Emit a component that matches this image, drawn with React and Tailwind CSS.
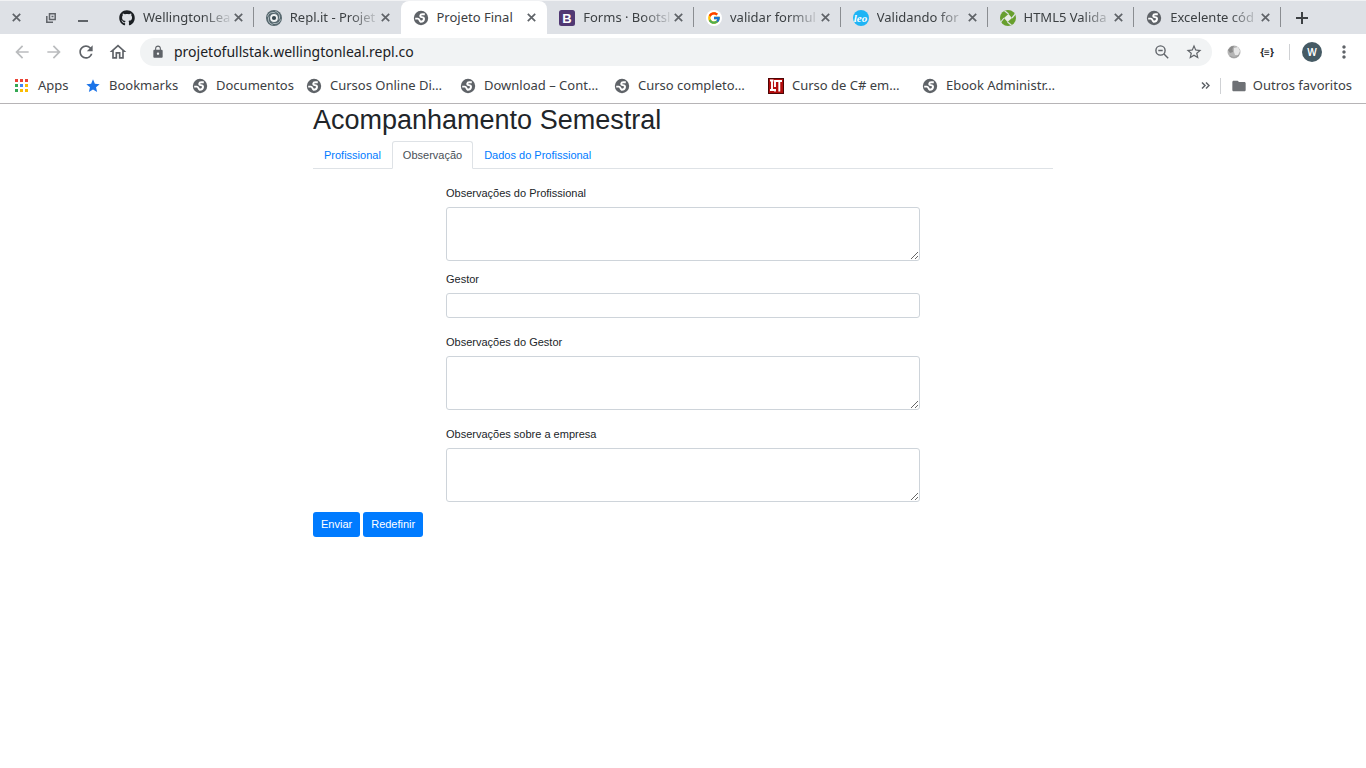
import { FaGithub } from "react-icons/fa";
import { FcGoogle } from "react-icons/fc";
import {
  MdArrowBack,
  MdArrowForward,
  MdRefresh,
  MdOutlineHome,
  MdLock,
  MdStar,
  MdStarBorder,
  MdFolder,
  MdMoreVert,
} from "react-icons/md";

function Globe() {
  return (
    <svg viewBox="0 0 16 16" className="size-4" aria-hidden="true">
      <circle cx="8" cy="8" r="7.2" fill="#5f6368" />
      <path
        d="M11.8 4.300H9.200C6.800 4.300 6.600 6.900 8.600 7.100 10.400 7.300 11.300 7.900 11 9.300 10.600 11.200 8.800 11.900 7.300 11.800M2.200 8.600H4.800C6.600 8.600 6.200 10.700 7.600 11.600"
        fill="none"
        stroke="#fff"
        strokeWidth="1.900"
        strokeLinejoin="round"
      />
    </svg>
  );
}

function ReplIcon() {
  return (
    <svg viewBox="0 0 16 16" className="size-4" aria-hidden="true">
      <circle cx="8" cy="8" r="8" fill="#56676e" />
      <g fill="none" stroke="#b9c5ca" strokeWidth=".9">
        <path d="M1.500 6.500C2.500 3 6 1.500 9.500 3M9.500 1.500C13 2.500 14.500 6 13 9.500M14.500 9.500C13.500 13 10 14.500 6.500 13M6.500 14.500C3 13.500 1.500 10 3 6.500" />
      </g>
      <circle cx="8" cy="8" r="3.900" fill="#eef1f2" />
      <circle cx="8" cy="8" r="2.100" fill="#37474f" />
    </svg>
  );
}

function BootstrapIcon() {
  return (
    <svg viewBox="0 0 16 16" className="size-4" aria-hidden="true">
      <rect width="16" height="16" rx="2.500" fill="#503873" />
      <text x="8" y="12.500" textAnchor="middle" fontSize="13" fontWeight="700" fontFamily="Liberation Sans, sans-serif" fill="#fff">B</text>
    </svg>
  );
}

function GoogleIcon() {
  return (
    <span className="flex size-4 items-center justify-center rounded-full bg-white">
      <FcGoogle className="size-[14px]" />
    </span>
  );
}

function LeoIcon() {
  return (
    <svg viewBox="0 0 16 16" className="size-4" aria-hidden="true">
      <circle cx="8" cy="8" r="8" fill="#1eb4f5" />
      <text x="7.500" y="11.500" textAnchor="middle" fontSize="11" fontWeight="700" fontStyle="italic" fontFamily="Liberation Serif, serif" fill="#fff">leo</text>
    </svg>
  );
}

function GreenIcon() {
  return (
    <svg viewBox="0 0 16 16" className="size-4" aria-hidden="true">
      <circle cx="8" cy="8" r="8" fill="#689f2e" />
      <path d="M8.500 4 12 8 7.500 12 4 8Z" fill="#e8ece6" />
      <path d="M8.500 4 4.500.8M12 8l3.300-4M7.500 12l4 3.200M4 8 .8 12" stroke="#dee1e6" strokeWidth="1.200" />
    </svg>
  );
}

function ItIcon() {
  return (
    <svg viewBox="0 0 16 16" className="size-4" aria-hidden="true">
      <rect x=".5" y=".5" width="15" height="15" fill="#b30c0c" stroke="#4d0606" />
      <path d="M2 2.500h3.500M4 2v9.500M2 12h4M7 2v7M7 11v2.500M7.500 3H14M11.300 3v10.500" stroke="#fff" strokeWidth="1.900" fill="none" />
    </svg>
  );
}

function ZoomOutIcon() {
  return (
    <svg viewBox="0 0 14 14" className="size-[14px]" fill="none" stroke="#5f6368" strokeWidth="1.400" aria-hidden="true">
      <circle cx="5.500" cy="5.500" r="4.600" />
      <path d="m9 9 4.200 4.200M3.300 5.500h4.400" />
    </svg>
  );
}

function AppsIcon() {
  const colors = ["#ea4335", "#ea4335", "#ea4335", "#34a853", "#4285f4", "#fbbc04", "#34a853", "#fbbc04", "#fbbc04"];
  return (
    <svg viewBox="0 0 13 13" className="ml-px mr-[2px] size-[13px]" aria-hidden="true">
      {colors.map((c, i) => (
        <rect key={i} x={(i % 3) * 5} y={Math.floor(i / 3) * 5} width="3" height="3" fill={c} />
      ))}
    </svg>
  );
}

function Cross() {
  return (
    <svg viewBox="0 0 9 9" className="size-[9px]" aria-hidden="true">
      <path d="M.8.8 8.200 8.200M8.200.8.8 8.200" stroke="#5f6368" strokeWidth="1.700" />
    </svg>
  );
}

const tabs = [
  { title: "WellingtonLea", icon: <FaGithub className="size-4 text-[#1b1f23]" />, sep: true },
  { title: "Repl.it - Projet", icon: <ReplIcon /> },
  { title: "Projeto Final", icon: <Globe />, active: true },
  { title: "Forms · Bootsl", icon: <BootstrapIcon />, sep: true },
  { title: "validar formul", icon: <GoogleIcon />, sep: true },
  { title: "Validando for", icon: <LeoIcon />, sep: true },
  { title: "HTML5 Valida", icon: <GreenIcon />, sep: true },
  { title: "Excelente cód", icon: <Globe />, sep: true },
];

const bookmarks = [
  { title: "Apps", icon: <AppsIcon />, width: "w-[71px]" },
  { title: "Bookmarks", icon: <MdStar className="size-4 text-[#1a73e8]" />, width: "w-[107px]" },
  { title: "Documentos", icon: <Globe />, width: "w-[114px]" },
  { title: "Cursos Online Di…", icon: <Globe />, width: "w-[154px]" },
  { title: "Download – Cont…", icon: <Globe />, width: "w-[154px]" },
  { title: "Curso completo…", icon: <Globe />, width: "w-[154px]" },
  { title: "Curso de C# em…", icon: <ItIcon />, width: "w-[154px]" },
  { title: "Ebook Administr…", icon: <Globe />, width: "w-[154px]" },
];

function TabStrip() {
  return (
    <div className="flex h-[34px] border-t border-[#f1f2f4] bg-[#dee1e6]">
      <div className="flex w-[107px] shrink-0 items-center pl-3">
        <button aria-label="Fechar janela" className="flex w-[34px] items-center">
          <Cross />
        </button>
        <button aria-label="Restaurar janela" className="flex w-8 items-center">
          <svg viewBox="0 0 10 10" className="size-[10px]" fill="none" stroke="#5f6368" strokeWidth="1.500" aria-hidden="true">
            <path d="M3.500.8h5.700v5.700H3.500zM.8 3v6.200H7M5.500 3.600h2" />
          </svg>
        </button>
        <button aria-label="Minimizar janela" className="flex h-2 w-[10px] items-end">
          <span className="h-[2px] w-[10px] bg-[#5f6368]" />
        </button>
      </div>
      <div role="tablist" className="flex min-w-0 flex-1">
        {tabs.map((t) => (
          <div
            key={t.title}
            className={
              "relative flex min-w-0 flex-1 basis-0 items-center pl-3 pr-[11px] " +
              (t.active ? "rounded-t-lg bg-white" : "")
            }
          >
            <span className="mr-2 shrink-0">{t.icon}</span>
            <button
              role="tab"
              aria-selected={Boolean(t.active)}
              className={
                "min-w-0 flex-1 overflow-hidden whitespace-nowrap text-left text-[#3c4043] " +
                (t.active ? "" : "[mask-image:linear-gradient(to_right,#000_65%,transparent)]")
              }
            >
              {t.title}
            </button>
            <button aria-label={"Fechar " + t.title} className="shrink-0">
              <Cross />
            </button>
            {t.sep && <span className="absolute right-0 top-[6px] h-5 w-px bg-[#8a8d91]" />}
          </div>
        ))}
      </div>
      <div className="flex w-[85px] shrink-0 items-center pl-[15px]">
        <button aria-label="Nova guia">
          <svg viewBox="0 0 12 12" className="size-3" aria-hidden="true">
            <path d="M6 0v12M0 6h12" stroke="#3c4043" strokeWidth="2" />
          </svg>
        </button>
      </div>
    </div>
  );
}

function Toolbar() {
  return (
    <div className="flex h-9 items-center px-3 text-[#5f6368]">
      <div className="flex w-32 shrink-0 items-center gap-3">
        <button aria-label="Voltar" className="text-[#babcbe]"><MdArrowBack className="size-5" /></button>
        <button aria-label="Avançar" className="text-[#babcbe]"><MdArrowForward className="size-5" /></button>
        <button aria-label="Recarregar"><MdRefresh className="size-5" /></button>
        <button aria-label="Página inicial"><MdOutlineHome className="size-5" /></button>
      </div>
      <div className="flex h-7 min-w-0 flex-1 items-center rounded-full bg-[#f1f3f4] pl-[11px] pr-[9px]">
        <MdLock className="size-[14px] shrink-0" />
        <input
          aria-label="Endereço"
          defaultValue="projetofullstak.wellingtonleal.repl.co"
          className="ml-[9px] min-w-0 flex-1 bg-transparent text-sm text-[#202124] outline-none"
        />
        <button aria-label="Zoom" className="mr-4"><ZoomOutIcon /></button>
        <button aria-label="Adicionar aos favoritos"><MdStarBorder className="size-[18px]" /></button>
      </div>
      <button aria-label="Extensão" className="ml-[15px]">
        <svg viewBox="0 0 14 14" className="size-[14px]" aria-hidden="true">
          <circle cx="7" cy="7" r="6.500" fill="#b5b5b5" />
          <path d="M1 5 4 1.500 7 1 5.500 4 6 7 3 8Z" fill="#8a8a8a" />
          <path d="M7 3 11 2l2 4-2 4-3 0-1-3Z" fill="#e6e6e6" />
          <path d="M3 11c3 2 6 2 9-1" stroke="#9a9a9a" fill="none" />
        </svg>
      </button>
      <button aria-label="Formatar JSON" className="ml-[18px] w-4 text-[10px] font-bold text-[#202124]">{"{≡}"}</button>
      <span className="ml-[14px] h-4 w-px shrink-0 bg-[#cfd1d4]" />
      <button aria-label="Perfil" className="ml-3 flex size-5 shrink-0 items-center justify-center rounded-full bg-[#455a64] text-[10px] font-semibold text-white">
        W
      </button>
      <button aria-label="Menu" className="ml-3"><MdMoreVert className="size-5" /></button>
    </div>
  );
}

function BookmarkBar() {
  return (
    <nav aria-label="Favoritos" className="flex h-[34px] items-center border-b border-[#b6b4b6] px-[14px] pb-[2px] text-[#3c4043]">
      {bookmarks.map((b) => (
        <a key={b.title} href="#" className={"flex shrink-0 items-center gap-2 whitespace-nowrap " + b.width}>
          <span className="shrink-0">{b.icon}</span>
          {b.title}
        </a>
      ))}
      <button aria-label="Mais favoritos" className="ml-auto">
        <svg viewBox="0 0 9 7" className="h-[7px] w-[9px]" fill="none" stroke="#5f6368" strokeWidth="1.500" aria-hidden="true">
          <path d="m1 .5 3 3-3 3M5 .5l3 3-3 3" />
        </svg>
      </button>
      <span className="ml-[10px] h-4 w-px bg-[#cfd1d4]" />
      <a href="#" className="ml-[10px] flex items-center gap-[6px] whitespace-nowrap">
        <MdFolder className="size-4 text-[#6e7175]" />
        Outros favoritos
      </a>
    </nav>
  );
}

const field = "block w-full rounded-[3px] border border-[#ced4da] bg-white px-2 py-1 outline-none";

function Field({ id, label, multiline, className = "" }) {
  return (
    <div className={className}>
      <label htmlFor={id} className="mb-[6px] block leading-4">{label}</label>
      {multiline ? (
        <textarea id={id} className={field + " h-[54px] resize-y"} />
      ) : (
        <input id={id} type="text" className={field + " h-[25px]"} />
      )}
    </div>
  );
}

const button = "h-[25px] rounded-[3px] bg-[#007bff] px-2 text-white";

export default function App() {
  return (
    <div className="min-h-screen bg-white font-['Noto_Sans',sans-serif] text-[13px]">
      <header>
        <TabStrip />
        <Toolbar />
        <BookmarkBar />
      </header>
      <main className="mx-auto max-w-[740px] font-['Liberation_Sans',Arial,sans-serif] text-[11px] text-[#212529]">
        <h1 className="text-[27px] leading-8">Acompanhamento Semestral</h1>
        <nav className="mt-[5px] flex h-7 border-b border-[#dee2e6] leading-4">
          <a href="#" className="border border-transparent px-[10px] py-[5px] text-[#007bff]">Profissional</a>
          <a href="#" aria-current="page" className="-mb-px rounded-t-[3px] border border-[#dee2e6] border-b-white bg-white px-[10px] py-[5px] text-[#495057]">Observação</a>
          <a href="#" className="border border-transparent px-[10px] py-[5px] text-[#007bff]">Dados do Profissional</a>
        </nav>
        <form onSubmit={(e) => e.preventDefault()}>
          <div className="mx-auto max-w-[474px] pt-4">
            <Field id="obs-profissional" label="Observações do Profissional" multiline />
            <Field id="gestor" label="Gestor" className="mt-[10px]" />
            <Field id="obs-gestor" label="Observações do Gestor" multiline className="mt-4" />
            <Field id="obs-empresa" label="Observações sobre a empresa" multiline className="mt-4" />
          </div>
          <div className="mt-[10px] flex gap-[3px]">
            <button type="submit" className={button}>Enviar</button>
            <button type="reset" className={button}>Redefinir</button>
          </div>
        </form>
      </main>
    </div>
  );
}
